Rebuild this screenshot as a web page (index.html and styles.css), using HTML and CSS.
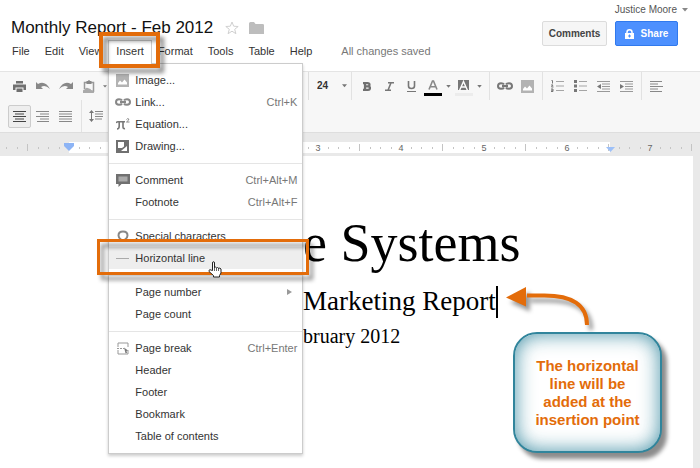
FILE: index.html
```html
<!DOCTYPE html>
<html lang="en">
<head>
<meta charset="utf-8">
<title>Monthly Report - Feb 2012</title>
<link rel="stylesheet" href="styles.css">
</head>
<body>
<svg class="defs" aria-hidden="true">
  <symbol id="caret" viewBox="0 0 6 4"><path d="M0 0h6L3 3.5z"/></symbol>
  <symbol id="link" viewBox="0 0 16 8"><path fill="none" stroke="currentColor" stroke-width="2" d="M7 2.5C6.500 1.500 5.500 1.200 4 1.200 2 1.200 1 2.300 1 4s1 2.800 3 2.800c1.500 0 2.500-.3 3-1.300M9 2.500c.5-1 1.500-1.300 3-1.300 2 0 3 1.100 3 2.800s-1 2.800-3 2.800c-1.500 0-2.500-.3-3-1.300M5 4h6"/></symbol>
  <symbol id="image" viewBox="0 0 13 13"><path fill="#b3b3b3" d="M0 0h13v13H0z"/><path fill="#fff" d="M2 10.500V9l2-2.500 2 2 2.500-3 2.500 3v2z"/></symbol>
</svg>

<header class="header">
  <div class="doc">
    <div class="title-row">
      <h1 class="title">Monthly Report - Feb 2012</h1>
      <svg class="star" width="14" height="14" viewBox="0 0 14 14"><path fill="none" stroke="#d0d0d0" d="M7 1l1.700 4.200 4.500.3-3.500 2.800 1.200 4.400L7 10.200l-3.900 2.500 1.200-4.400L.8 5.500l4.500-.3z"/></svg>
      <svg width="15" height="12" viewBox="0 0 15 12"><path fill="#bdbdbd" d="M0 1.500Q0 0 1.500 0H5l1.500 2H13.500Q15 2 15 3v9H0z"/></svg>
    </div>
    <nav class="menubar">
      <button>File</button>
      <button>Edit</button>
      <button>View</button>
      <div class="open">
        <button class="tab">Insert</button>
        <div class="menu">
          <button class="item"><svg width="13" height="13"><use href="#image"/></svg><span>Image...</span></button>
          <button class="item"><svg width="16" height="8"><use href="#link"/></svg><span>Link...</span><kbd>Ctrl+K</kbd></button>
          <button class="item"><svg width="14" height="12" viewBox="0 0 14 12"><path fill="none" stroke="#777" stroke-width="1.600" d="M0 5Q.5 3.800 2 3.800h7M3.200 4v4Q3.200 11 1 11M7 4v5q0 2 2 1.500"/><path fill="none" stroke="#888" d="M10.500 1.500q1-1.500 2.300-.5.5 1-2.300 3h3"/></svg><span>Equation...</span></button>
          <button class="item"><svg width="13" height="13" viewBox="0 0 13 13"><path fill="#707070" d="M0 0h13v13H0z"/><path fill="#fff" d="M2 2h6v4.500L6 8H2z"/><path fill="#fff" d="M11 6v5H5z"/></svg><span>Drawing...</span></button>
          <hr>
          <button class="item"><svg width="14" height="13" viewBox="0 0 14 13"><path fill="#707070" d="M0 0h14v10H5.500L2.500 13v-3H0z"/><path fill="#aaa" d="M2.500 2.500h9v5h-9z"/></svg><span>Comment</span><kbd>Ctrl+Alt+M</kbd></button>
          <button class="item"><i></i><span>Footnote</span><kbd>Ctrl+Alt+F</kbd></button>
          <hr>
          <button class="item"><svg width="12" height="12" viewBox="0 0 12 12"><path fill="none" stroke="#888" stroke-width="2" d="M0 11h4V9.500Q1.500 8 1.500 5.500 1.500 1.500 6 1.500t4.500 4Q10.500 8 8 9.500V11h4"/></svg><span>Special characters</span></button>
          <button class="item hover"><svg width="13" height="2"><path fill="#aaa" d="M0 1h13v1H0z"/></svg><span>Horizontal line</span></button>
          <hr>
          <button class="item"><i></i><span>Page number</span><svg class="sub" width="5" height="6" viewBox="0 0 5 6"><path fill="#999" d="M0 0l5 3-5 3z"/></svg></button>
          <button class="item"><i></i><span>Page count</span></button>
          <hr>
          <button class="item"><svg width="12" height="13" viewBox="0 0 12 13"><path fill="none" stroke="#999" d="M1 5V1h10v4M1 8v4h10V8"/><path stroke="#999" stroke-dasharray="2 1" d="M0 6.500h7"/><path fill="#777" d="M7 5.500l4 3-1.500.5.5 2-1.500.3-.5-2z"/></svg><span>Page break</span><kbd>Ctrl+Enter</kbd></button>
          <button class="item"><i></i><span>Header</span></button>
          <button class="item"><i></i><span>Footer</span></button>
          <button class="item"><i></i><span>Bookmark</span></button>
          <button class="item"><i></i><span>Table of contents</span></button>
        </div>
      </div>
      <button>Format</button>
      <button>Tools</button>
      <button>Table</button>
      <button>Help</button>
      <span class="saved">All changes saved</span>
    </nav>
  </div>
  <div class="account">
    <button class="user">Justice Moore <svg width="6" height="4"><use href="#caret"/></svg></button>
    <div class="actions">
      <button class="btn">Comments</button>
      <button class="btn share"><svg width="9" height="10" viewBox="0 0 9 10"><path fill="none" stroke="#fff" stroke-width="1.500" d="M2 5V3.200Q2 .8 4.500.8T7 3.200V5"/><path fill="#fff" d="M0 4h9v6H0z"/><path stroke="#4d90fe" d="M4.500 5.500v3M3 7h3"/></svg>Share</button>
    </div>
  </div>
</header>

<div class="toolbar">
  <div class="row">
    <div class="group first">
      <button class="tool" aria-label="Print"><svg width="13" height="11" viewBox="0 0 13 11"><path fill="#707070" d="M3 0h7v2.500H3zM0 3.500h13V9h-2.500V6.500h-8V9H0zM3.500 7.500h6V11h-6z"/></svg></button>
      <button class="tool" aria-label="Undo"><svg width="14" height="8" viewBox="0 0 14 8"><path fill="#888" d="M0 0l2 2Q9-2 14 7q-5-5-9-2l2 2H0z"/></svg></button>
      <button class="tool" aria-label="Redo"><svg width="14" height="8" viewBox="0 0 14 8"><path fill="#888" d="M14 0l-2 2Q5-2 0 7q5-5 9-2L7 7h7z"/></svg></button>
      <button class="tool" aria-label="Web clipboard"><svg width="12" height="13" viewBox="0 0 12 13"><path fill="none" stroke="#999" stroke-width="1.500" d="M1.500 9V2.500h9V12"/><path fill="#888" d="M3.500 1h1.500q1-2 2 0h1.500v3h-5z"/><path fill="#aaa" d="M0 13q-1-3 1.500-3.500Q3 6.500 6 8.500q2 0 2 1.500 3 0 3 3z"/></svg></button>
      <button class="drop" aria-label="Clipboard options"><svg width="4" height="3"><use href="#caret"/></svg></button>
    </div>
    <div class="group size">
      <select aria-label="Font size"><option>24</option></select>
      <svg width="5" height="4"><use href="#caret"/></svg>
    </div>
    <div class="group format">
      <button class="tool" aria-label="Bold"><svg width="8" height="9" viewBox="0 0 8 9"><path fill="none" stroke="#707070" stroke-width="2.200" d="M0 1.100h4.500Q6.500 1.100 6.500 2.700T4.500 4.300H2h3Q7 4.300 7 6T5 7.900H0M2 1v7"/></svg></button>
      <button class="tool" aria-label="Italic"><svg width="9" height="9" viewBox="0 0 9 9"><path fill="none" stroke="#777" stroke-width="1.600" d="M3 .8h6M0 8.200h6M6 .8L3 8.200"/></svg></button>
      <button class="tool" aria-label="Underline"><svg width="9" height="11" viewBox="0 0 9 11"><path fill="none" stroke="#777" stroke-width="1.600" d="M1.500 0v5Q1.500 7.500 4.500 7.500T7.500 5V0"/><path fill="#777" d="M0 10h9v1H0z"/></svg></button>
      <button class="tool" aria-label="Text color"><svg class="swatch" width="18" height="16" viewBox="0 0 18 16"><path fill="none" stroke="#888" stroke-width="1.600" d="M5 9.500L8.500 1h1L13 9.500M6 6.800h6"/><path fill="#000" d="M0 13h18v3H0z"/></svg></button>
      <button class="drop" aria-label="Text color options"><svg width="5" height="3"><use href="#caret"/></svg></button>
      <button class="tool" aria-label="Highlight color"><svg class="swatch" width="18" height="16" viewBox="0 0 18 16"><path fill="#777" d="M3 0h11v10H3z"/><path fill="none" stroke="#fff" stroke-width="1.400" d="M4.500 10.500L8.500 1.500l4 9M6 7h5"/><path fill="#ececec" d="M0 13h18v3H0z"/></svg></button>
      <button class="drop" aria-label="Highlight options"><svg width="5" height="3"><use href="#caret"/></svg></button>
    </div>
    <div class="group wide">
      <button class="tool" aria-label="Insert link"><svg width="16" height="8"><use href="#link"/></svg></button>
      <button class="tool" aria-label="Insert image"><svg width="13" height="13"><use href="#image"/></svg></button>
    </div>
    <div class="group wide">
      <button class="tool" aria-label="Numbered list"><svg width="13" height="12" viewBox="0 0 13 12"><path stroke="#a5a5a5" d="M5 1.500h8M5 6h8M5 10.500h8"/><path fill="none" stroke="#777" d="M.5.5h1v3M0 5h2L.5 7h2M0 9h2v2.500H0M0 10.200h2"/></svg></button>
      <button class="tool" aria-label="Bulleted list"><svg width="13" height="12" viewBox="0 0 13 12"><path stroke="#a5a5a5" d="M5 1.500h8M5 6h8M5 10.500h8"/><path fill="#777" d="M0 0h3v3H0zM0 4.500h3v3H0zM0 9h3v3H0z"/></svg></button>
      <button class="tool" aria-label="Decrease indent"><svg width="13" height="11" viewBox="0 0 13 11"><path stroke="#999" d="M0 .5h13M5 3h8M5 5.500h8M5 8h8M0 10.500h13"/><path fill="#777" d="M4 3v5L0 5.500z"/></svg></button>
      <button class="tool" aria-label="Increase indent"><svg width="13" height="11" viewBox="0 0 13 11"><path stroke="#999" d="M0 .5h13M5 3h8M5 5.500h8M5 8h8M0 10.500h13"/><path fill="#777" d="M0 3v5l4-2.500z"/></svg></button>
    </div>
    <div class="group">
      <button class="tool" aria-label="Align left"><svg width="13" height="11" viewBox="0 0 13 11"><path stroke="#888" d="M0 .5h12M0 3h8M0 5.500h13M0 8h8M0 10.500h12"/></svg></button>
    </div>
  </div>
  <div class="row">
    <div class="group first">
      <button class="tool active" aria-label="Align center"><svg width="13" height="11" viewBox="0 0 13 11"><path stroke="#444" d="M0 .5h13M2 3h9M0 5.500h13M2 8h9M0 10.500h13"/></svg></button>
      <button class="tool" aria-label="Align right"><svg width="13" height="11" viewBox="0 0 13 11"><path stroke="#888" d="M0 .5h13M4 3h9M0 5.500h13M4 8h9M1 10.500h12"/></svg></button>
      <button class="tool" aria-label="Justify"><svg width="13" height="11" viewBox="0 0 13 11"><path stroke="#888" d="M0 .5h13M0 3h13M0 5.500h13M0 8h13M0 10.500h13"/></svg></button>
    </div>
    <div class="group">
      <button class="tool" aria-label="Line spacing"><svg width="14" height="12" viewBox="0 0 14 12"><path fill="#777" d="M2.500 0L5 3H0zM2.500 12L0 9h5zM2 2h1v8H2z"/><path stroke="#888" d="M6 1.500h8M6 4h8M6 6.500h8M6 9h7"/></svg></button>
    </div>
  </div>
</div>

<svg class="ruler" height="11" role="img" aria-label="Ruler">
  <defs>
    <pattern id="inch" x="69" width="83" height="11" patternUnits="userSpaceOnUse">
      <path stroke="#c4c4c4" d="M10.500 5v2M20.500 5v2M31.500 5v2M41.500 2v7M52.500 5v2M62.500 5v2M73.500 5v2"/>
    </pattern>
  </defs>
  <path fill="#fff" d="M69 0h541v11H69z"/>
  <path fill="url(#inch)" d="M0 0h693v11H0z"/>
  <g class="numbers"><text x="318" y="9">3</text><text x="401" y="9">4</text><text x="484" y="9">5</text><text x="567" y="9">6</text><text x="650" y="9">7</text></g>
  <path fill="#8db4f5" d="M64 1h10v3l-5 5-5-5z"/>
  <path fill="#9dc0f8" d="M606 5h9l-4.500 5z"/>
</svg>

<main class="canvas">
  <article class="page">
    <p class="company">e Systems</p>
    <p class="subject">Marketing Report<span class="caret"></span></p>
    <p class="date">bruary 2012</p>
  </article>
</main>

<div class="frame frame-tab"></div>
<div class="frame frame-line"></div>
<svg class="pointer" width="14" height="17" viewBox="0 0 14 17"><path fill="#fff" stroke="#222" d="M4.500 9.500V2Q4.500.7 5.500.7T6.500 2v4.500q1-1 2 .3 1-.8 2 .4 1.500-.5 2.500.8v4l-1.500 2.500v1.500h-6V14.500L1 10.500Q.5 9 2 8.700z"/><path stroke="#222" stroke-width=".7" d="M6.500 6v4M8.500 7v3M10.500 7v3"/></svg>
<svg class="arrow" width="96" height="50" viewBox="0 0 96 50"><path fill="none" stroke="#e36c0a" stroke-width="4" d="M22 10.500H38Q82 10 82 40"/><path fill="#e36c0a" d="M1 12.500L21 2v19.500z"/></svg>
<aside class="callout">The horizontal line will be added at the insertion point</aside>
</body>
</html>
```
FILE: styles.css
```css
* { box-sizing: border-box; }

body {
  margin: 0;
  min-height: 100vh;
  display: flex;
  flex-direction: column;
  position: relative;
  background: #e9e9e9;
  color: #333;
  font: 11px/14px "Liberation Sans", Arial, sans-serif;
  overflow: hidden;
}

svg { display: block; flex: none; }
.defs { position: absolute; width: 0; height: 0; }
button {
  margin: 0;
  padding: 0;
  border: 0;
  background: none;
  color: inherit;
  font: inherit;
  white-space: nowrap;
}

.header {
  display: flex;
  justify-content: space-between;
  background: #fff;
}
.doc { padding: 17px 0 8px 11px; }
.title-row { display: flex; align-items: center; gap: 10px; height: 22px; }
.title { margin: 0; color: #111; font-size: 17px; line-height: 22px; font-weight: 400; }
.star { margin-left: 2px; }

.menubar { display: flex; align-items: center; height: 24px; gap: 15px; padding-left: 1px; }
.open { position: relative; height: 22px; margin: 0 -9px; }
.tab {
  position: relative;
  z-index: 3;
  height: 24px;
  padding: 0 7px 4px;
  border: 1px solid #ccc;
  border-bottom: 0;
  background: #fff;
}
.saved { padding-left: 14px; color: #777; }

.menu {
  position: absolute;
  z-index: 2;
  top: 23px;
  left: 0;
  width: 195px;
  padding: 5px 0 6px;
  border: 1px solid #ccc;
  background: #fff;
  box-shadow: 0 2px 3px rgba(0, 0, 0, .2);
}
.menu hr { margin: 6px 0 5px; border: 0; border-top: 1px solid #e5e5e5; }
.item {
  display: grid;
  grid-template-columns: 25px 1fr auto;
  align-items: center;
  width: 100%;
  height: 22px;
  padding: 0 5px 0 1px;
  text-align: left;
  color: #333;
}
.item svg:first-child { justify-self: center; color: #888; }
.item .sub { margin-right: 5px; }
.item kbd { color: #777; font: inherit; }
.hover { background: #eee; }

.account {
  display: flex;
  flex-direction: column;
  align-items: flex-end;
  padding: 3px 12px 0 0;
  color: #555;
  font-size: 10px;
}
.user { display: flex; align-items: center; gap: 5px; height: 14px; }
.user svg { fill: #888; }
.actions { display: flex; gap: 8px; margin: 4px 10px 0 0; }
.btn {
  display: flex;
  align-items: center;
  justify-content: center;
  gap: 7px;
  height: 25px;
  width: 65px;
  border: 1px solid #dcdcdc;
  border-radius: 2px;
  background: #f6f6f6;
  color: #444;
  font-weight: 700;
}
.share { width: 63px; border-color: #3079ed; background: #4d90fe; color: #fff; }

.toolbar {
  border-top: 1px solid #e4e4e4;
  border-bottom: 1px solid #dedede;
  background: #f7f7f7;
}
.row { display: flex; height: 32px; }
.row:first-child { height: 28px; }
.group { display: flex; align-items: center; padding: 0 3px; border-right: 1px solid #e2e2e2; }
.group:last-child { border-right: 0; }
.first { padding: 0 4px 0 8px; }
.row:first-child .first { flex: 0 0 309px; border-right-color: #ddd; }
.tool { display: flex; align-items: center; justify-content: center; width: 22px; height: 23px; color: #777; }
.group.first .tool, .wide .tool { width: 23px; }
.swatch { margin-top: 4px; }
.drop { display: flex; align-items: center; justify-content: center; width: 9px; height: 23px; fill: #777; }
.active { border: 1px solid #ccc; border-radius: 2px; background: #eee; }
.size { width: 43px; padding: 0 4px 0 8px; fill: #777; }
.format { padding: 0 5px 0 4px; }
.size select {
  flex: 1;
  min-width: 0;
  padding: 0;
  border: 0;
  background: none;
  color: #333;
  font: 700 10px/14px "Liberation Sans", Arial, sans-serif;
  appearance: none;
}

.ruler { width: 100%; margin: 9px 0 3px; }
.numbers { fill: #666; font-size: 9px; text-anchor: middle; }

.canvas { flex: 1; display: flex; padding-right: 7px; }
.page {
  flex: 1;
  padding: 55px 0 0 303px;
  background: #fff;
  color: #000;
  font-family: "Liberation Serif", "Times New Roman", serif;
}
.page p { margin: 0; white-space: nowrap; }
.company { font-size: 54px; line-height: 64px; }
.subject { display: flex; font-size: 27px; line-height: 52px; }
.caret { width: 2px; height: 32px; margin-top: 11px; background: #000; }
.date { font-size: 20px; line-height: 18px; }

.frame {
  position: absolute;
  z-index: 5;
  border: 4px solid #e36c0a;
  filter: drop-shadow(4px 5px 2px rgba(0, 0, 0, .45));
  pointer-events: none;
}
.frame-tab { left: 99px; top: 32px; width: 61px; height: 36px; }
.frame-line { left: 97px; top: 239px; width: 212px; height: 36px; border-width: 3px; }
.pointer { position: absolute; z-index: 6; left: 208px; top: 261px; }
.arrow { position: absolute; left: 505px; top: 285px; filter: drop-shadow(4px 5px 2px rgba(0, 0, 0, .4)); }
.callout {
  position: absolute;
  left: 513px;
  top: 332px;
  width: 149px;
  padding: 23px 20px 22px;
  border: 2px solid #31859c;
  border-radius: 24px;
  background: #fff;
  box-shadow: inset 0 0 20px rgba(49, 133, 156, .9), 5px 6px 4px rgba(0, 0, 0, .45);
  color: #e36c0a;
  font-size: 15px;
  line-height: 18px;
  font-weight: 700;
  text-align: center;
}
```
